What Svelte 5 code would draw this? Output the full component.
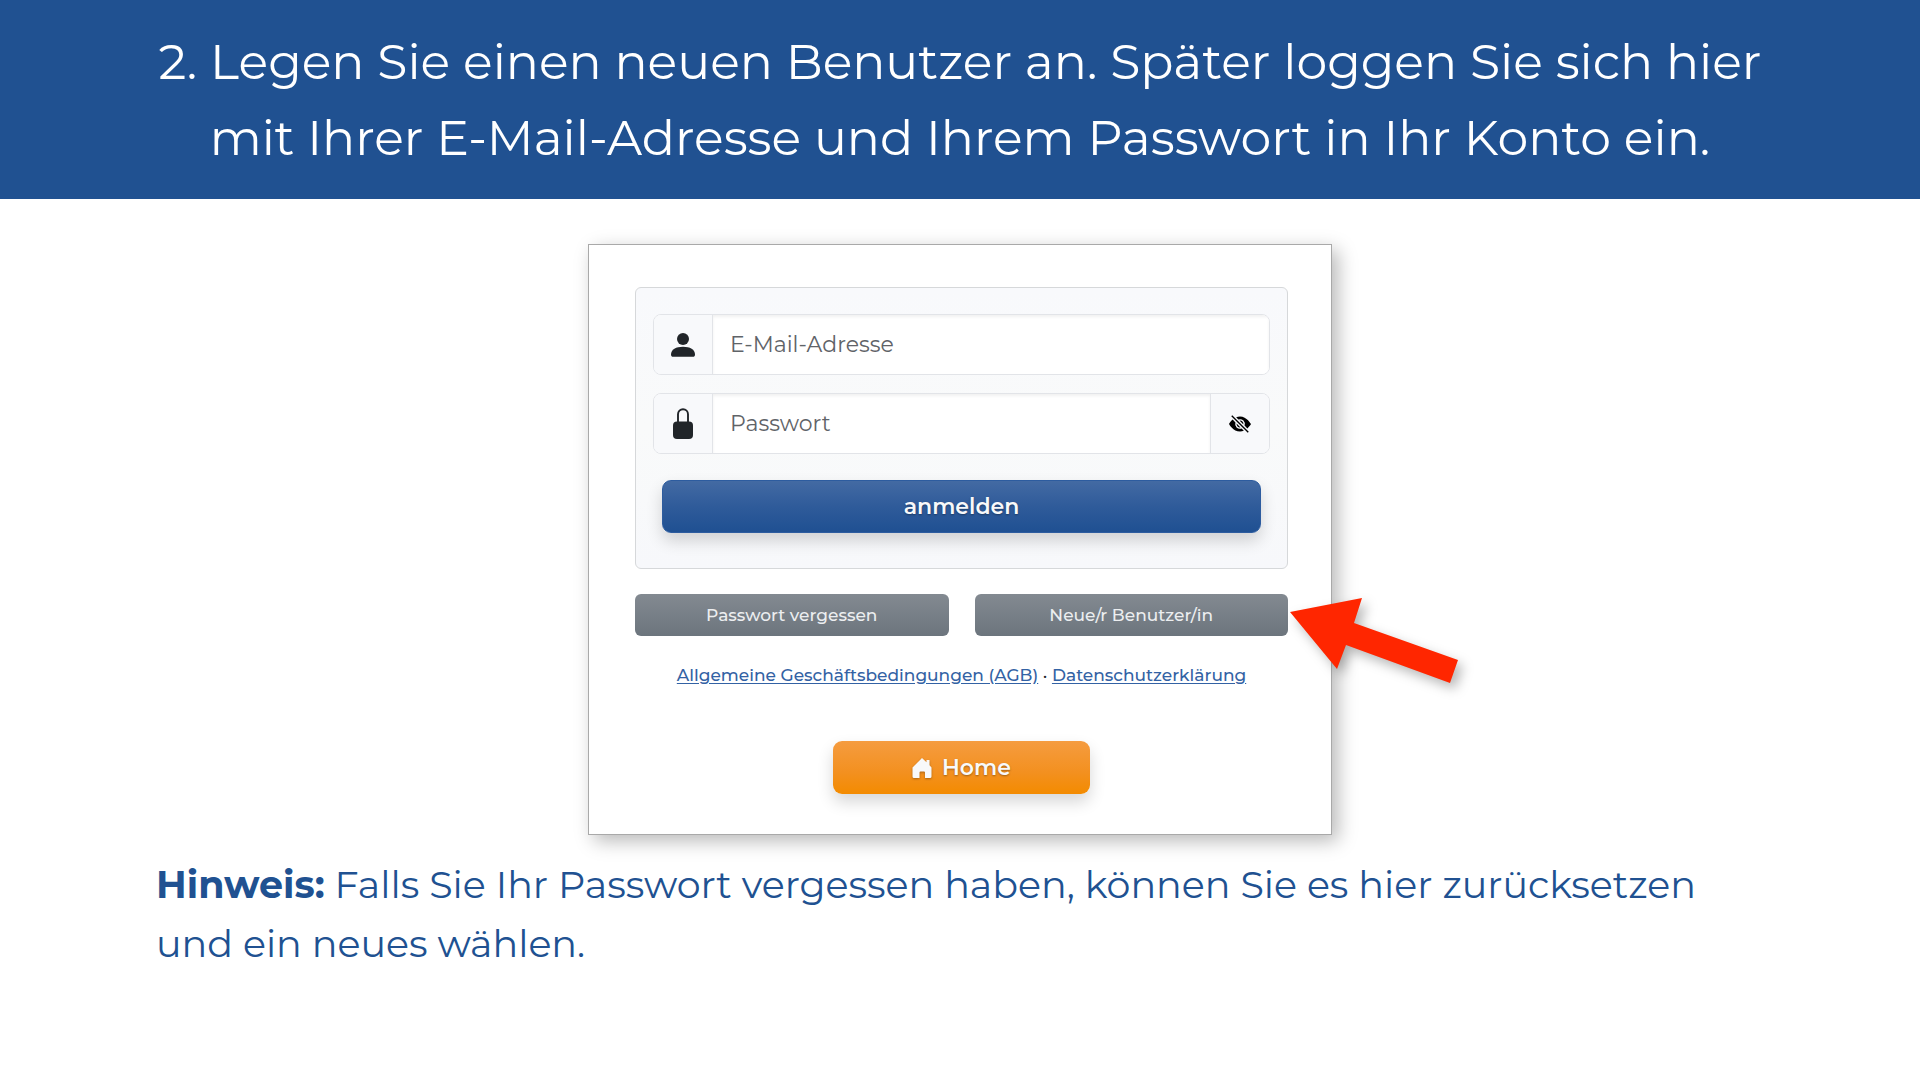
<script>
  let email = $state('');
  let password = $state('');
  let visible = $state(false);
</script>

<div class="page">
  <header class="banner">
    <h1>2. Legen Sie einen neuen Benutzer an. Später loggen Sie sich hier<br />mit Ihrer E-Mail-Adresse und Ihrem Passwort in Ihr Konto ein.</h1>
  </header>

  <main>
    <section class="card">
      <form class="panel" onsubmit={(e) => e.preventDefault()}>
        <div class="group">
          <label class="addon" for="email" aria-label="E-Mail-Adresse">
            <svg class="person" viewBox="0 0 24 24" aria-hidden="true">
              <circle cx="12" cy="6" r="6" />
              <path d="M0 21.5C0 16.5 5 13.8 12 13.8S24 16.5 24 21.5C24 23 23.2 23.8 21.8 23.8H2.2C.8 23.8 0 23 0 21.5Z" />
            </svg>
          </label>
          <input id="email" type="email" placeholder="E-Mail-Adresse" bind:value={email} />
        </div>

        <div class="group">
          <label class="addon" for="password" aria-label="Passwort">
            <svg class="lock" viewBox="0 0 20 31" aria-hidden="true">
              <path d="M5 15V6.2a5 5 0 0 1 10 0V15" fill="none" stroke="currentColor" stroke-width="1.9" />
              <rect x="0" y="13.5" width="20" height="17.5" rx="4" />
            </svg>
          </label>
          <input id="password" type={visible ? 'text' : 'password'} placeholder="Passwort" bind:value={password} />
          <button class="toggle" type="button" aria-label="Passwort anzeigen" onclick={() => (visible = !visible)}>
            <svg class="eye" viewBox="0 0 16 16" aria-hidden="true">
              <path d="m10.79 12.912-1.614-1.615a3.5 3.5 0 0 1-4.474-4.474l-2.06-2.06C.938 6.278 0 8 0 8s3 5.5 8 5.5a7.029 7.029 0 0 0 2.79-.588zM5.21 3.088A7.028 7.028 0 0 1 8 2.500c5 0 8 5.500 8 5.500s-.939 1.721-2.641 3.238l-2.062-2.062a3.500 3.500 0 0 0-4.474-4.474L5.210 3.089z" />
              <path d="M5.525 7.646a2.500 2.500 0 0 0 2.829 2.829l-2.830-2.829zm4.950.708-2.829-2.830a2.500 2.500 0 0 1 2.829 2.829zm3.171 6-12-12 .708-.708 12 12-.708.707z" />
            </svg>
          </button>
        </div>

        <button class="btn login" type="submit">anmelden</button>
      </form>

      <div class="actions">
        <button class="btn grey" type="button">Passwort vergessen</button>
        <div class="marked">
          <button class="btn grey" type="button">Neue/r Benutzer/in</button>
          <svg class="arrow" viewBox="0 0 170 88" aria-hidden="true">
            <path d="M0 14 72 0 64 25 168 62 160 85 56 47 47 71Z" />
          </svg>
        </div>
      </div>

      <p class="links">
        <a href="#agb">Allgemeine Geschäftsbedingungen (AGB)</a> · <a href="#datenschutz">Datenschutzerklärung</a>
      </p>

      <button class="btn home" type="button">
        <svg viewBox="0 0 20 20" aria-hidden="true">
          <path d="M10 0 14.500 4.300V2H17.500V7.200L19.500 9.500V18.500Q19.500 20 18 20H13V14.500Q13 13.500 12 13.500H8.500Q7.500 13.500 7.500 14.500V20H2Q.500 20 .500 18.500V9.500Z" />
        </svg>
        Home
      </button>
    </section>

    <p class="note"><strong>Hinweis:</strong> Falls Sie Ihr Passwort vergessen haben, können Sie es hier zurücksetzen<br />und ein neues wählen.</p>
  </main>
</div>

<style>
  :global(body) {
    margin: 0;
    background: #fff;
  }

  .page {
    font-family: Montserrat, Inter, sans-serif;
    color: #212529;
    overflow-x: hidden;
  }

  .page *,
  .page {
    box-sizing: border-box;
  }

  .banner {
    padding: 24px 32px 23px;
    background: #205191;
    color: #fff;
    text-align: center;
  }

  h1 {
    margin: 0;
    font-size: 49px;
    line-height: 76px;
    font-weight: 400;
  }

  main {
    padding: 45px 24px 80px;
  }

  .card {
    max-width: 744px;
    margin: 0 auto;
    padding: 42px 43px 40px 46px;
    border: 1px solid #a9a9a9;
    background: #fff;
    box-shadow: 6px 6px 18px rgba(0, 0, 0, 0.28);
    display: flex;
    flex-direction: column;
  }

  .panel {
    display: flex;
    flex-direction: column;
    gap: 18px;
    padding: 26px 17px 35px;
    border: 1px solid #d6d8da;
    border-radius: 6px;
    background: linear-gradient(#f8f9fc, #f9fafa 50%, #f7f8fb);
  }

  .group {
    display: flex;
    height: 61px;
    border: 1px solid #e2e4e8;
    border-radius: 8px;
    overflow: hidden;
    background: #fff;
  }

  .addon,
  .toggle {
    flex: none;
    width: 59px;
    display: flex;
    align-items: center;
    justify-content: center;
    background: #f8f9fb;
    color: #212529;
  }

  .addon {
    border-right: 1px solid #e2e4e8;
  }

  .toggle {
    padding: 0;
    border: 0;
    border-left: 1px solid #e2e4e8;
    color: #000;
  }

  input {
    flex: 1;
    min-width: 0;
    padding: 0 17px;
    border: 0;
    outline: 0;
    background: #fff;
    box-shadow: inset 0 2px 3px rgba(0, 0, 0, 0.06);
    font: inherit;
    font-size: 22px;
    color: #212529;
  }

  input::placeholder {
    color: #5f6368;
    opacity: 1;
  }

  svg {
    display: block;
    fill: currentColor;
  }

  .person {
    width: 24px;
    height: 24px;
  }

  .lock {
    width: 20px;
    height: 31px;
  }

  .eye {
    width: 22px;
    height: 22px;
  }

  .btn {
    display: flex;
    align-items: center;
    justify-content: center;
    padding: 0;
    border: 0;
    font-family: inherit;
    color: #f8f9fa;
    text-shadow: 0 1px 2px rgba(0, 0, 0, 0.35);
  }

  .login,
  .home {
    height: 53px;
    border-radius: 9px;
    font-size: 22px;
    font-weight: 600;
    box-shadow: 0 8px 16px rgba(0, 0, 0, 0.16);
  }

  .login {
    margin: 8px 9px 0;
    border: 1px solid #2d5c9f;
    background: linear-gradient(#436aa3, #2f5b9a 50%, #1f5092);
  }

  .actions {
    display: grid;
    grid-template-columns: 1fr 1fr;
    gap: 26px;
    margin-top: 25px;
  }

  .grey {
    width: 100%;
    height: 42px;
    border-radius: 6px;
    background: linear-gradient(#838a91, #6c757d);
    color: #eceef0;
    font-size: 17px;
    font-weight: 500;
    text-shadow: none;
  }

  .marked {
    position: relative;
  }

  .arrow {
    position: absolute;
    left: calc(100% + 2px);
    top: 4px;
    width: 170px;
    height: 88px;
    overflow: visible;
    color: #ff2600;
    filter: drop-shadow(5px 6px 6px rgba(0, 0, 0, 0.28));
    pointer-events: none;
  }

  .links {
    margin: 26px 0 0;
    font-size: 17px;
    font-weight: 500;
    line-height: 26px;
    text-align: center;
  }

  a {
    color: #3362a4;
    text-underline-offset: 2px;
  }

  .home {
    align-self: center;
    gap: 10px;
    width: 257px;
    margin-top: 53px;
    background: linear-gradient(#f59c40, #f3901f 60%, #f38b00);
  }

  .home svg {
    width: 20px;
    height: 20px;
    filter: drop-shadow(0 1px 1px rgba(0, 0, 0, 0.3));
  }

  .note {
    max-width: 1608px;
    margin: 20px auto 0;
    color: #205191;
    font-size: 38px;
    font-weight: 400;
    line-height: 59px;
  }

  .note strong {
    font-weight: 700;
  }
</style>
